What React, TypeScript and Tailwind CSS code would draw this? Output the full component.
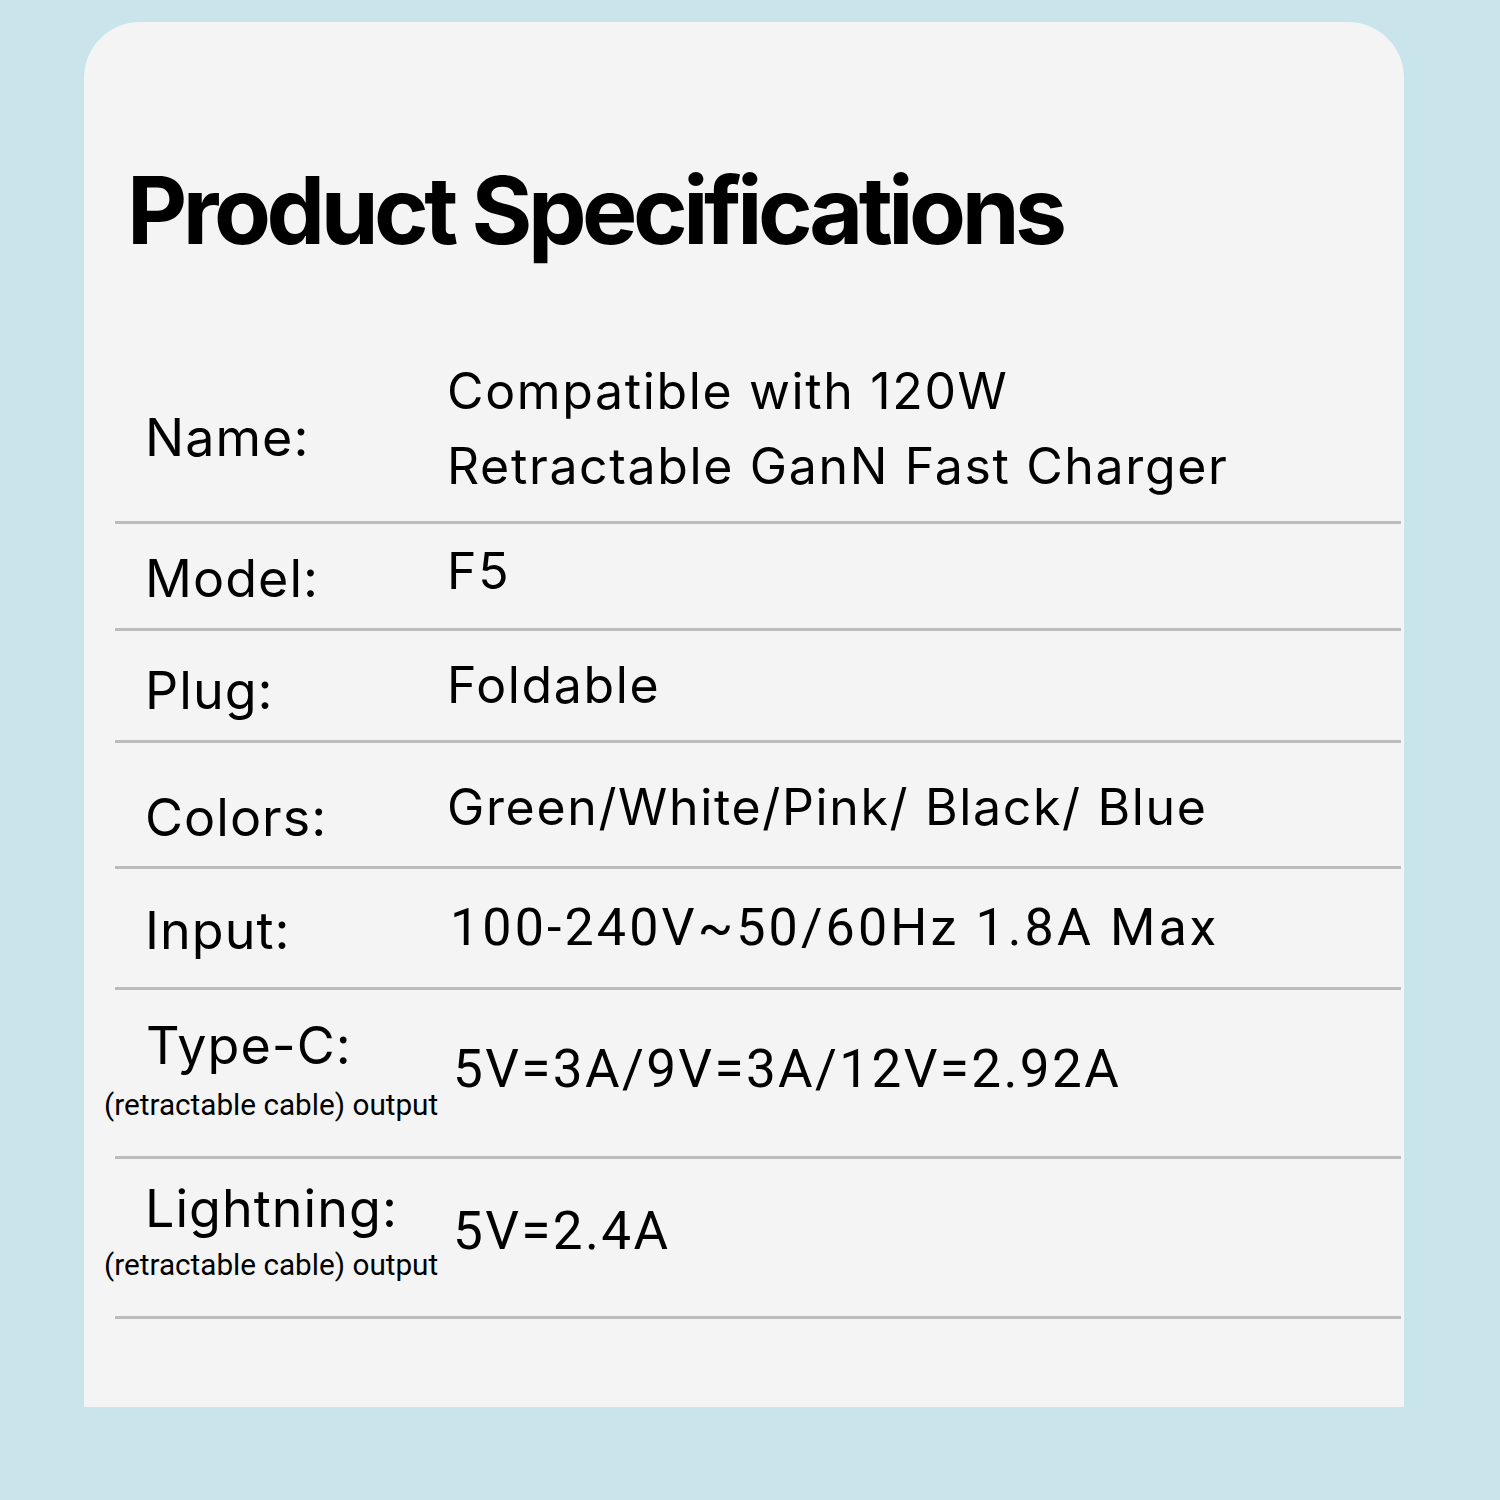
const ROWS = [
  { label: "Name:", value: ["Compatible with 120W", "Retractable GanN Fast Charger"], h: "h-[181px]", lp: "pt-[72px]", vp: "pt-[14px]" },
  { label: "Model:", value: ["F5"], h: "h-[104px]", lp: "pt-[29px]", vp: "pt-[10px]" },
  { label: "Plug:", value: ["Foldable"], h: "h-[109px]", lp: "pt-[34px]", vp: "pt-[17px]" },
  { label: "Colors:", value: ["Green/White/Pink/ Black/ Blue"], h: "h-[123px]", lp: "pt-[49px]", vp: "pt-[27px]" },
]

function Divider() {
  return <div className="ml-[31px] mr-[3px] h-[3px] bg-[#bcbcbc]" />
}

export default function App() {
  return (
    <div className="w-[1500px] h-[1500px] bg-[#cae4eb] pt-[22px] pl-[84px]">
      <div className="w-[1320px] h-[1385px] bg-[#f4f4f4] rounded-t-[56px] pt-[142px] text-black">
        <h1 className="pl-[43px] text-[93px] leading-none font-bold tracking-[-0.048em] font-['Inter',sans-serif]">
          Product Specifications
        </h1>

        <div className="mt-[83px] font-['Inter',sans-serif]">
          {ROWS.map((row) => (
            <div key={row.label}>
              <div className={`ml-[31px] mr-[3px] grid grid-cols-[332px_1fr] ${row.h}`}>
                <div className={`pl-[30px] text-[52px] leading-none tracking-[0.02em] ${row.lp}`}>{row.label}</div>
                <div className={`text-[50px] leading-[75px] tracking-[0.033em] ${row.vp}`}>
                  {row.value.map((v) => (
                    <div key={v}>{v}</div>
                  ))}
                </div>
              </div>
              <Divider />
            </div>
          ))}

          {/* Input */}
          <div className="ml-[31px] mr-[3px] grid grid-cols-[332px_1fr] h-[118px]">
            <div className="pl-[30px] pt-[36px] text-[52px] leading-none tracking-[0.02em]">Input:</div>
            <div className="pl-[3px] pt-[33px] text-[52px] leading-none tracking-[0.06em] font-['Roboto',sans-serif]">
              100-240V~50/60Hz 1.8A Max
            </div>
          </div>
          <Divider />

          {/* Type-C */}
          <div className="ml-[31px] mr-[3px] grid grid-cols-[332px_1fr] h-[166px]">
            <div className="pt-[30px]">
              <div className="pl-[31px] text-[52px] leading-none tracking-[0.02em]">Type-C:</div>
              <div className="-ml-[11px] mt-[18px] text-[29.7px] leading-none whitespace-nowrap font-['Roboto',sans-serif]">
                (retractable cable) output
              </div>
            </div>
            <div className="pl-[6px] pt-[53px] text-[53px] leading-none tracking-[0.045em] font-['Roboto',sans-serif]">
              5V=3A/9V=3A/12V=2.92A
            </div>
          </div>
          <Divider />

          {/* Lightning */}
          <div className="ml-[31px] mr-[3px] grid grid-cols-[332px_1fr] h-[157px]">
            <div className="pt-[24px]">
              <div className="pl-[30px] text-[52px] leading-none tracking-[0.02em]">Lightning:</div>
              <div className="-ml-[11px] mt-[15px] text-[29.7px] leading-none whitespace-nowrap font-['Roboto',sans-serif]">
                (retractable cable) output
              </div>
            </div>
            <div className="pl-[6px] pt-[46px] text-[53px] leading-none tracking-[0.045em] font-['Roboto',sans-serif]">
              5V=2.4A
            </div>
          </div>
          <Divider />
        </div>
      </div>
    </div>
  )
}
